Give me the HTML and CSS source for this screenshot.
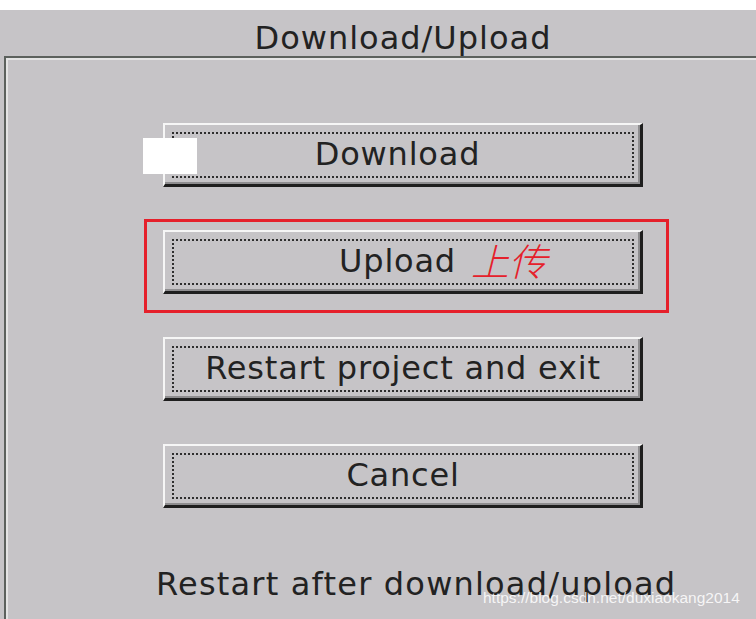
FILE: index.html
```html
<!DOCTYPE html>
<html lang="en">
<head>
    <meta charset="UTF-8">
    <meta name="viewport" content="width=device-width, initial-scale=1.0">
    <title>Download/Upload</title>
    <link rel="stylesheet" href="styles.css">
</head>
<body>
    <div class="top-strip"></div>

    <div class="window">
        <div class="title">Download/Upload</div>

        <div class="frame">
            <div class="btn-row">
                <button class="btn"><span class="focus">Download&nbsp;</span></button>
                <div class="cover"></div>
            </div>

            <div class="btn-row marked">
                <button class="btn"><span class="focus">Upload&nbsp;</span></button>
                <span class="note">上传</span>
            </div>

            <div class="btn-row">
                <button class="btn"><span class="focus">Restart project and exit</span></button>
            </div>

            <div class="btn-row">
                <button class="btn"><span class="focus">Cancel</span></button>
            </div>

            <p class="hint">Restart after download/upload</p>
        </div>
    </div>

    <div class="watermark">https://blog.csdn.net/duxiaokang2014</div>
</body>
</html>
```

FILE: styles.css
```css
body {
    margin: 0;
    background-color: #c6c4c7;
    font-family: "DejaVu Sans", Verdana, sans-serif;
    color: #222;
    overflow: hidden;
    height: 619px;
    position: relative;
}
.top-strip {
    height: 10px;
    background-color: #fff;
}
.window {
    width: 756px;
    height: 609px;
    padding-top: 10px;
    box-sizing: border-box;
    display: flex;
    flex-direction: column;
}
.title {
    padding-left: 50px;
    font-size: 32px;
    letter-spacing: 1px;
    line-height: 36px;
    text-align: center;
}

/* --- group box --- */
.frame {
    flex: 1;
    margin-left: 4px;
    box-sizing: border-box;
    border-top: 2px solid #5c615d;
    border-left: 2px solid #5c615d;
    box-shadow: inset 2px 2px 0 #e4e4e4;
    padding: 65px 0 0 44px;
    display: flex;
    flex-direction: column;
    align-items: center;
    gap: 43px;
}
.btn-row {
    position: relative;
}
.btn {
    appearance: none;
    display: block;
    width: 480px;
    height: 64px;
    margin: 0;
    padding: 7px 6px 6px 7px;
    box-sizing: border-box;
    background-color: #c6c4c7;
    border-top: 2px solid #f6f6f6;
    border-left: 2px solid #f6f6f6;
    border-right: 3px solid #1e1e1e;
    border-bottom: 3px solid #1e1e1e;
    box-shadow: inset -2px -2px 0 #8e8d8f;
    font-family: inherit;
    color: inherit;
    cursor: pointer;
}
.focus {
    display: flex;
    justify-content: center;
    align-items: center;
    height: 100%;
    box-sizing: border-box;
    border: 2px dotted #2e2e2e;
    font-size: 32px;
    letter-spacing: 0.8px;
    padding-bottom: 2px;
}

/* white blob pasted over the screenshot */
.cover {
    position: absolute;
    left: -20px;
    top: 15px;
    width: 54px;
    height: 36px;
    background-color: #fff;
}

/* red annotation around the upload button */
.marked::after {
    content: "";
    position: absolute;
    left: -19px;
    top: -11px;
    right: -26px;
    bottom: -19px;
    border: 3px solid #e5202b;
}
.note {
    position: absolute;
    left: 308px;
    top: 8px;
    font-family: "Noto Sans CJK SC", sans-serif;
    font-style: italic;
    font-weight: 300;
    font-size: 38px;
    line-height: 44px;
    color: #e5202b;
}

.hint {
    align-self: flex-start;
    margin: 15px 0 0 106px;
    font-size: 32px;
    letter-spacing: 1.2px;
    line-height: 36px;
}

.watermark {
    position: absolute;
    left: 483px;
    top: 589px;
    font-family: "Liberation Sans", Arial, sans-serif;
    font-size: 15.5px;
    color: rgba(255, 255, 255, 0.85);
}
```
